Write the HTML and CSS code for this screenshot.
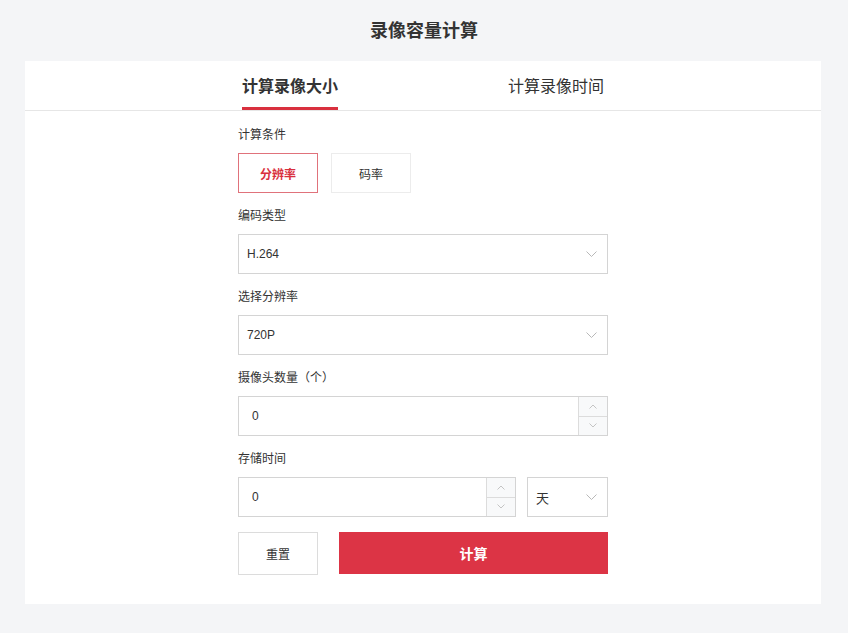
FILE: index.html
```html
<!DOCTYPE html>
<html lang="zh-CN">
<head>
<meta charset="utf-8">
<title>录像容量计算</title>
<link rel="stylesheet" href="styles.css">
</head>
<body>
<h1 class="title">录像容量计算</h1>
<div class="card">
  <div class="tabs">
    <div class="tab active">计算录像大小</div>
    <div class="tab">计算录像时间</div>
  </div>
  <form class="form">
    <div class="field">
      <div class="label">计算条件</div>
      <div class="toggle-row">
        <button type="button" class="toggle active">分辨率</button>
        <button type="button" class="toggle">码率</button>
      </div>
    </div>
    <div class="field">
      <div class="label">编码类型</div>
      <div class="select">
        <span class="value">H.264</span>
        <svg class="chev" width="11" height="7" viewBox="0 0 11 7"><polyline points="0.5,0.5 5.5,5.5 10.5,0.5" fill="none" stroke="#b8b8b8" stroke-width="1"/></svg>
      </div>
    </div>
    <div class="field">
      <div class="label">选择分辨率</div>
      <div class="select">
        <span class="value">720P</span>
        <svg class="chev" width="11" height="7" viewBox="0 0 11 7"><polyline points="0.5,0.5 5.5,5.5 10.5,0.5" fill="none" stroke="#b8b8b8" stroke-width="1"/></svg>
      </div>
    </div>
    <div class="field">
      <div class="label">摄像头数量（个）</div>
      <div class="number">
        <span class="num-value">0</span>
        <div class="spin">
          <div class="spin-btn"><svg width="8" height="5" viewBox="0 0 8 5"><polyline points="0.5,4.5 4,1 7.5,4.5" fill="none" stroke="#c4c4c4" stroke-width="1"/></svg></div>
          <div class="spin-btn"><svg width="8" height="5" viewBox="0 0 8 5"><polyline points="0.5,0.5 4,4 7.5,0.5" fill="none" stroke="#c4c4c4" stroke-width="1"/></svg></div>
        </div>
      </div>
    </div>
    <div class="field">
      <div class="label">存储时间</div>
      <div class="row">
        <div class="number grow">
          <span class="num-value">0</span>
          <div class="spin">
            <div class="spin-btn"><svg width="8" height="5" viewBox="0 0 8 5"><polyline points="0.5,4.5 4,1 7.5,4.5" fill="none" stroke="#c4c4c4" stroke-width="1"/></svg></div>
            <div class="spin-btn"><svg width="8" height="5" viewBox="0 0 8 5"><polyline points="0.5,0.5 4,4 7.5,0.5" fill="none" stroke="#c4c4c4" stroke-width="1"/></svg></div>
          </div>
        </div>
        <div class="select unit">
          <span class="value">天</span>
          <svg class="chev" width="11" height="7" viewBox="0 0 11 7"><polyline points="0.5,0.5 5.5,5.5 10.5,0.5" fill="none" stroke="#b8b8b8" stroke-width="1"/></svg>
        </div>
      </div>
    </div>
    <div class="actions">
      <button type="button" class="btn-reset">重置</button>
      <button type="button" class="btn-calc">计算</button>
    </div>
  </form>
</div>
</body>
</html>
```
FILE: styles.css
```css
* { box-sizing: border-box; }
html, body {
  margin: 0;
  padding: 0;
  background: #f4f5f7;
  font-family: "Liberation Sans", "Noto Sans CJK SC", sans-serif;
  color: #333;
}
.title {
  margin: 0;
  height: 61px;
  line-height: 62px;
  text-align: center;
  font-size: 18px;
  font-weight: bold;
  color: #333;
}
.card {
  width: 796px;
  margin-left: 25px;
  background: #fff;
}
.tabs {
  display: flex;
  justify-content: space-between;
  width: 370px;
  margin: 0 auto;
  height: 50px;
  position: relative;
}
.card {
  position: relative;
}
.card::before {
  content: "";
  position: absolute;
  left: 0;
  right: 0;
  top: 49px;
  height: 1px;
  background: #e6e6e6;
}
.tab {
  margin: 0 4px;
  height: 49px;
  padding-top: 15px;
  line-height: 22px;
  font-size: 16px;
  color: #333;
  position: relative;
  z-index: 1;
}
.tab.active {
  font-weight: bold;
  border-bottom: 3px solid #d9303e;
}
.form {
  width: 370px;
  margin: 0 auto;
  padding: 14px 0 29px;
}
.field {
  margin-bottom: 13px;
}
.label {
  font-size: 12px;
  line-height: 20px;
  margin-bottom: 8px;
  color: #333;
}
.toggle-row {
  display: flex;
  gap: 13px;
}
.toggle {
  width: 80px;
  height: 40px;
  background: #fff;
  border: 1px solid #ececec;
  font-family: inherit;
  font-size: 12px;
  color: #333;
  padding: 0;
}
.toggle.active {
  border-color: #e0727b;
  color: #d9303e;
  font-weight: bold;
}
.select {
  height: 40px;
  border: 1px solid #d4d4d4;
  display: flex;
  align-items: center;
  justify-content: space-between;
  padding: 0 10px 0 8px;
  font-size: 12px;
  color: #333;
}
.number {
  height: 40px;
  border: 1px solid #d4d4d4;
  display: flex;
  align-items: stretch;
}
.num-value {
  flex: 1;
  display: flex;
  align-items: center;
  padding-left: 13px;
  font-size: 12px;
  color: #333;
}
.spin {
  width: 29px;
  border-left: 1px solid #dcdcdc;
  background: #f8f9fa;
  display: flex;
  flex-direction: column;
}
.spin-btn {
  flex: 1;
  display: flex;
  align-items: center;
  justify-content: center;
}
.spin-btn + .spin-btn {
  border-top: 1px solid #dcdcdc;
}
.row {
  display: flex;
  gap: 11px;
}
.grow {
  flex: 1;
}
.unit {
  width: 81px;
  font-size: 13px;
}
.actions {
  display: flex;
  gap: 21px;
  margin-top: 15px;
}
.btn-reset {
  width: 80px;
  height: 43px;
  background: #fff;
  border: 1px solid #dcdcdc;
  font-family: inherit;
  font-size: 12px;
  color: #333;
  padding: 0;
}
.btn-calc {
  flex: 1;
  height: 42px;
  background: #dc3445;
  border: 0;
  color: #fff;
  font-family: inherit;
  font-size: 14px;
  font-weight: bold;
  padding: 0;
}
```
